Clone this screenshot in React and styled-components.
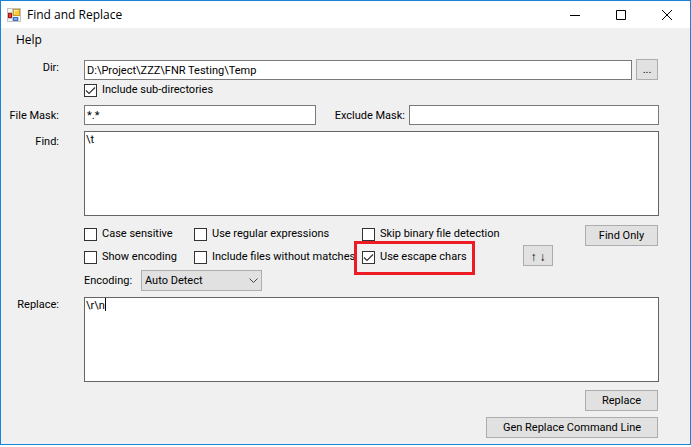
import React, { useState } from 'react';
import styled, { createGlobalStyle } from 'styled-components';

const GlobalStyle = createGlobalStyle`
  *, *::after {
    box-sizing: border-box;
  }
  body {
    margin: 0;
    background: #fff;
  }
  body, input, textarea, select, button {
    font-family: Roboto, "Liberation Sans", sans-serif;
    font-size: 11px;
    line-height: 16px;
    color: #000;
  }
`;

const Window = styled.main`
  border: 1px solid #1883d7;
  background: #f0f0f0;
`;

const TitleBar = styled.header`
  display: flex;
  align-items: center;
  height: 27px;
  padding-left: 6px;
  background: #fff;
`;

const Title = styled.h1`
  flex: 1;
  margin: 0 0 0 6px;
  font-family: "Open Sans", "Noto Sans", sans-serif;
  font-size: 12px;
  font-weight: 400;
`;

const CaptionButton = styled.button`
  display: flex;
  align-items: center;
  justify-content: center;
  width: 46px;
  height: 27px;
  padding: 0;
  border: 0;
  background: transparent;
`;

const MenuBar = styled.nav`
  display: flex;
  height: 24px;
  padding-left: 9px;
`;

const MenuItem = styled.button`
  padding: 0 6px;
  border: 0;
  background: transparent;
  font-family: "Open Sans", "Noto Sans", sans-serif;
  font-size: 12px;
`;

const Form = styled.form`
  padding: 7px 31px 6px 0;
`;

const FieldRow = styled.div`
  display: grid;
  grid-template-columns: 58px minmax(0, 1fr);
  column-gap: 25px;
  margin-bottom: ${(p) => p.$gap || 0}px;
`;

const FieldLabel = styled.label`
  padding-top: ${(p) => p.$top || 0}px;
  text-align: right;
  white-space: nowrap;
`;

const DirControls = styled.div`
  display: flex;
  align-items: flex-end;
  gap: 4px;
  padding-right: 1px;
`;

const MaskControls = styled.div`
  display: grid;
  grid-template-columns: minmax(0, 232fr) 93px minmax(0, 250fr);
`;

const MaskLabel = styled(FieldLabel)`
  padding-right: 4px;
`;

const TextInput = styled.input`
  flex: 1;
  width: 100%;
  min-width: 0;
  height: 20px;
  padding: 0 2px;
  border: 1px solid #7a7a7a;
  border-radius: 0;
  background: #fff;
  outline: none;
`;

const TextBox = styled.div`
  position: relative;
  height: 85px;
`;

const TextArea = styled.textarea`
  display: block;
  width: 100%;
  height: 100%;
  padding: 0 1px;
  border: 1px solid #646464;
  border-radius: 0;
  background: #fff;
  outline: none;
  resize: none;
  caret-color: transparent;
`;

const Caret = styled.span`
  position: absolute;
  top: 1px;
  left: 21px;
  width: 1px;
  height: 13px;
  background: #000;
`;

const Button = styled.button`
  flex: none;
  width: ${(p) => p.$width}px;
  height: 21px;
  padding: 0;
  border: 1px solid #adadad;
  background: #e1e1e1;
`;

const Options = styled.div`
  display: flex;
  justify-content: space-between;
  align-items: flex-start;
  padding-right: 1px;
`;

const CheckGrid = styled.div`
  display: grid;
  grid-template-columns: 110px 168px auto;
  row-gap: 7px;
  padding-top: 1px;
`;

const CheckLabel = styled.label`
  position: relative;
  display: flex;
  align-items: center;
  gap: 5px;
  white-space: nowrap;

  ${(p) => p.$marked && `
    &::after {
      content: "";
      position: absolute;
      inset: -8px auto -10px -8px;
      width: 121px;
      border: 3px solid #ed1c24;
      pointer-events: none;
    }
  `}
`;

const CheckBox = styled.span`
  display: grid;
  flex: none;

  > * {
    grid-area: 1 / 1;
  }
  svg {
    pointer-events: none;
  }
`;

const CheckInput = styled.input`
  appearance: none;
  width: 13px;
  height: 13px;
  margin: 0;
  border: 1px solid #333;
  background: #fff;
`;

const OptionButtons = styled.div`
  display: flex;
  align-items: flex-start;
  gap: 32px;
`;

const SwapButton = styled(Button)`
  margin-top: 20px;
  padding-top: 2px;
  font-size: 12px;
`;

const EncodingRow = styled.div`
  display: flex;
  gap: 9px;
`;

const EncodingLabel = styled.label`
  width: 48px;
  padding-top: 3px;
`;

const SelectWrap = styled.div`
  display: grid;
  align-items: center;
  width: 121px;

  > * {
    grid-area: 1 / 1;
  }
  svg {
    justify-self: end;
    margin-right: 4px;
    pointer-events: none;
  }
`;

const Select = styled.select`
  appearance: none;
  width: 100%;
  height: 21px;
  padding: 0 3px;
  border: 1px solid #adadad;
  border-radius: 0;
  background: #e1e1e1;
`;

const Actions = styled.div`
  display: flex;
  flex-direction: column;
  align-items: flex-end;
  gap: 6px;
  padding-right: 1px;
`;

const AppIcon = () => (
  <svg width="14" height="14" viewBox="0 0 14 14" aria-hidden="true">
    <rect x="0.5" y="0.5" width="13" height="13" fill="#f4f4f4" stroke="#c3c3c3" />
    <path d="M5.5 1v12M1 4.5h5M1 10.5h5M11.5 9v4" stroke="#c9c9c9" />
    <rect x="1.5" y="5.5" width="3" height="4" fill="#d8432f" stroke="#a51d10" />
    <rect x="6.5" y="1.5" width="6" height="6" fill="#fbc93c" stroke="#d19a1a" />
    <path d="M7 2h4v1h-3v3h-1z" fill="#fff0a8" />
    <rect x="6.5" y="9.5" width="4" height="3" fill="#78aef2" stroke="#3c70cc" />
  </svg>
);

const Check = ({ id, label, checked, onChange, marked }) => (
  <CheckLabel htmlFor={id} $marked={marked}>
    <CheckBox>
      <CheckInput id={id} type="checkbox" checked={checked} onChange={onChange} />
      {checked && (
        <svg width="13" height="13" viewBox="0 0 13 13" fill="none" aria-hidden="true">
          <path d="M2 6.5l3 3 6-6" stroke="#333" strokeWidth="1.2" />
        </svg>
      )}
    </CheckBox>
    {label}
  </CheckLabel>
);

const options = [
  { id: 'caseSensitive', label: 'Case sensitive' },
  { id: 'useRegex', label: 'Use regular expressions' },
  { id: 'skipBinary', label: 'Skip binary file detection' },
  { id: 'showEncoding', label: 'Show encoding' },
  { id: 'withoutMatches', label: 'Include files without matches' },
  { id: 'escapeChars', label: 'Use escape chars', marked: true },
];

const App = () => {
  const [dir, setDir] = useState('D:\\Project\\ZZZ\\FNR Testing\\Temp');
  const [fileMask, setFileMask] = useState('*.*');
  const [excludeMask, setExcludeMask] = useState('');
  const [find, setFind] = useState('\\t');
  const [replace, setReplace] = useState('\\r\\n');
  const [encoding, setEncoding] = useState('Auto Detect');
  const [checks, setChecks] = useState({ subDirs: true, escapeChars: true });

  const toggle = (id) => setChecks({ ...checks, [id]: !checks[id] });

  const swap = () => {
    setFind(replace);
    setReplace(find);
  };

  return (
    <>
      <GlobalStyle />
      <Window>
        <TitleBar>
          <AppIcon />
          <Title>Find and Replace</Title>
          <CaptionButton aria-label="Minimize">
            <svg width="10" height="10"><path d="M0 5.5h10" stroke="#000" /></svg>
          </CaptionButton>
          <CaptionButton aria-label="Maximize">
            <svg width="10" height="10"><path d="M.5 .5h9v9h-9z" fill="none" stroke="#000" /></svg>
          </CaptionButton>
          <CaptionButton aria-label="Close">
            <svg width="10" height="10"><path d="M0 0l10 10M10 0L0 10" stroke="#000" /></svg>
          </CaptionButton>
        </TitleBar>
        <MenuBar>
          <MenuItem>Help</MenuItem>
        </MenuBar>

        <Form onSubmit={(e) => e.preventDefault()}>
          <FieldRow $gap={2}>
            <FieldLabel htmlFor="dir" $top={1}>Dir:</FieldLabel>
            <DirControls>
              <TextInput id="dir" value={dir} onChange={(e) => setDir(e.target.value)} />
              <Button type="button" $width={22}>...</Button>
            </DirControls>
          </FieldRow>
          <FieldRow $gap={7}>
            <span />
            <Check
              id="subDirs"
              label="Include sub-directories"
              checked={checks.subDirs}
              onChange={() => toggle('subDirs')}
            />
          </FieldRow>
          <FieldRow $gap={6}>
            <FieldLabel htmlFor="fileMask" $top={3}>File Mask:</FieldLabel>
            <MaskControls>
              <TextInput id="fileMask" value={fileMask} onChange={(e) => setFileMask(e.target.value)} />
              <MaskLabel htmlFor="excludeMask" $top={3}>Exclude Mask:</MaskLabel>
              <TextInput id="excludeMask" value={excludeMask} onChange={(e) => setExcludeMask(e.target.value)} />
            </MaskControls>
          </FieldRow>
          <FieldRow $gap={9}>
            <FieldLabel htmlFor="find" $top={3}>Find:</FieldLabel>
            <TextBox>
              <TextArea id="find" value={find} onChange={(e) => setFind(e.target.value)} />
            </TextBox>
          </FieldRow>
          <FieldRow $gap={4}>
            <span />
            <Options>
              <CheckGrid>
                {options.map((o) => (
                  <Check
                    key={o.id}
                    id={o.id}
                    label={o.label}
                    marked={o.marked}
                    checked={!!checks[o.id]}
                    onChange={() => toggle(o.id)}
                  />
                ))}
              </CheckGrid>
              <OptionButtons>
                <SwapButton type="button" $width={30} onClick={swap}>↑ ↓</SwapButton>
                <Button type="button" $width={73}>Find Only</Button>
              </OptionButtons>
            </Options>
          </FieldRow>
          <FieldRow $gap={6}>
            <span />
            <EncodingRow>
              <EncodingLabel htmlFor="encoding">Encoding:</EncodingLabel>
              <SelectWrap>
                <Select id="encoding" value={encoding} onChange={(e) => setEncoding(e.target.value)}>
                  <option>Auto Detect</option>
                </Select>
                <svg width="9" height="6" fill="none" aria-hidden="true">
                  <path d="M.5 .5l4 4 4-4" stroke="#444" />
                </svg>
              </SelectWrap>
            </EncodingRow>
          </FieldRow>
          <FieldRow $gap={8}>
            <FieldLabel htmlFor="replace">Replace:</FieldLabel>
            <TextBox>
              <TextArea id="replace" value={replace} onChange={(e) => setReplace(e.target.value)} />
              <Caret />
            </TextBox>
          </FieldRow>
          <Actions>
            <Button type="submit" $width={73}>Replace</Button>
            <Button type="button" $width={172}>Gen Replace Command Line</Button>
          </Actions>
        </Form>
      </Window>
    </>
  );
};

export default App;
